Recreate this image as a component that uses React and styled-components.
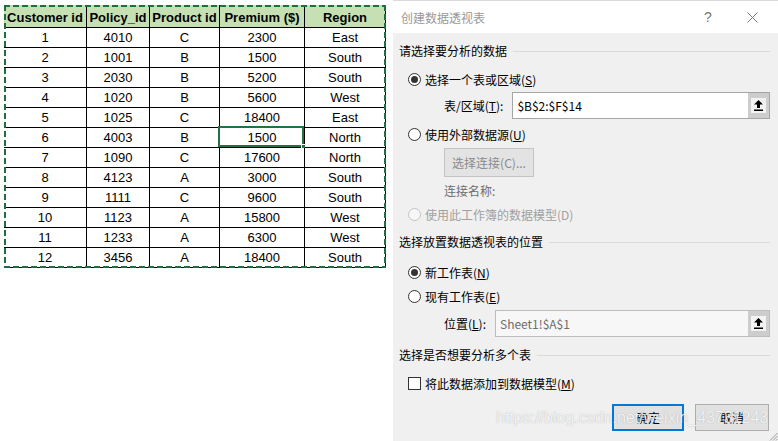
import React from "react";
import styled, { createGlobalStyle } from "styled-components";

const GlobalStyle = createGlobalStyle`
  html, body {
    margin: 0;
    padding: 0;
    background: #fff;
  }
  body {
    font-family: "Liberation Sans", Arial, sans-serif;
  }
`;

const Page = styled.div`
  display: flex;
  width: 778px;
  height: 441px;
  overflow: hidden;
`;

const LeftPane = styled.div`
  width: 393px;
  flex-shrink: 0;
  padding: 5px 0 0 4px;
  box-sizing: border-box;
`;

const dash = (dir) =>
  `repeating-linear-gradient(${dir}, #1f6e42 0 6px, transparent 6px 9px)`;

const Sheet = styled.div`
  position: relative;
  width: 382px;
  display: grid;
  grid-template-columns: 83px 63px 70px 85px 81px;

  &::after {
    content: "";
    position: absolute;
    inset: 0;
    pointer-events: none;
    background:
      ${dash("90deg")} top left / 100% 2px no-repeat,
      ${dash("90deg")} bottom left / 100% 2px no-repeat,
      ${dash("180deg")} top left / 2px 100% no-repeat,
      ${dash("180deg")} top right / 2px 100% no-repeat;
  }
`;

const Cell = styled.div`
  position: relative;
  box-sizing: border-box;
  height: ${(p) => (p.$head ? "23px" : "20px")};
  padding-top: ${(p) => (p.$head ? "2px" : "0")};
  border-right: 1px solid #000;
  border-bottom: 1px solid #000;
  background: ${(p) => (p.$head ? "#c6e0b4" : "#fff")};
  font-size: 13px;
  font-weight: ${(p) => (p.$head ? 700 : 400)};
  color: #000;
  display: flex;
  align-items: center;
  justify-content: center;
  white-space: nowrap;
`;

const Selection = styled.div`
  position: absolute;
  left: -2px;
  top: -2px;
  right: 0;
  bottom: 0;
  border: 2px solid #217346;
  pointer-events: none;

  &::after {
    content: "";
    position: absolute;
    right: -4px;
    bottom: -4px;
    width: 5px;
    height: 5px;
    background: #217346;
    border: 1px solid #fff;
    box-sizing: border-box;
  }
`;

const Dialog = styled.div`
  position: relative;
  width: 385px;
  height: 441px;
  flex-shrink: 0;
  background: #f0f0f0;
  font-family: "Noto Sans CJK SC", "Liberation Sans", sans-serif;
  font-size: 12px;
  color: #000;
  overflow: hidden;
`;

const TitleBar = styled.div`
  height: 33px;
  box-sizing: border-box;
  background: #fff;
  border-top: 1px solid #dcdcdc;
  display: flex;
  align-items: center;
  padding-left: 8px;
`;

const Title = styled.span`
  color: #999;
  font-size: 12px;
`;

const TitleButton = styled.div`
  width: 44px;
  height: 32px;
  display: flex;
  align-items: center;
  justify-content: center;
  color: #777;
  font-size: 14px;
  font-family: "Liberation Sans", sans-serif;
  margin-left: ${(p) => (p.$first ? "auto" : "0")};
  margin-right: ${(p) => (p.$last ? "4px" : "0")};
`;

const Body = styled.div`
  padding: 0 8px 0 6px;
  display: flex;
  flex-direction: column;
`;

const SectionHead = styled.div`
  height: 20px;
  margin-top: ${(p) => p.$mt}px;
  display: flex;
  align-items: center;
  gap: 6px;
  line-height: 20px;

  &::after {
    content: "";
    flex: 1;
    height: 1px;
    background: #dadada;
  }
`;

const OptionRow = styled.div`
  height: 20px;
  margin-top: ${(p) => p.$mt}px;
  padding-left: 9px;
  display: flex;
  align-items: center;
  gap: 4px;
  color: ${(p) => (p.$disabled ? "#a0a0a0" : "#000")};
`;

const Radio = styled.span`
  width: 13px;
  height: 13px;
  box-sizing: border-box;
  border-radius: 50%;
  border: 1px solid ${(p) => (p.$disabled ? "#c4c4c4" : "#333")};
  background: ${(p) => (p.$disabled ? "#f7f7f7" : "#fff")};
  display: flex;
  align-items: center;
  justify-content: center;
  flex-shrink: 0;

  &::after {
    content: "";
    display: ${(p) => (p.$checked ? "block" : "none")};
    width: 7px;
    height: 7px;
    border-radius: 50%;
    background: #333;
  }
`;

const Checkbox = styled.span`
  width: 13px;
  height: 13px;
  box-sizing: border-box;
  border: 1px solid #333;
  background: #fff;
  flex-shrink: 0;
`;

const Field = styled.div`
  height: 27px;
  margin-top: ${(p) => p.$mt}px;
  padding-left: 45px;
  display: flex;
  align-items: center;
  gap: 9px;
`;

const InputBox = styled.div`
  flex: 1;
  height: 27px;
  box-sizing: border-box;
  border: 1px solid ${(p) => (p.$disabled ? "#bcbcbc" : "#a6a6a6")};
  background: ${(p) => (p.$disabled ? "#f7f7f7" : "#fff")};
  display: flex;
  align-items: stretch;
`;

const InputText = styled.div`
  flex: 1;
  display: flex;
  align-items: center;
  padding-left: 4px;
  color: ${(p) => (p.$disabled ? "#6d6d6d" : "#000")};
`;

const PickButton = styled.div`
  width: 21px;
  background: #cdcdcd;
  display: flex;
  align-items: center;
  justify-content: center;
`;

const PickFace = styled.div`
  width: 15px;
  height: 15px;
  background: #f3f3f3;
  display: flex;
  align-items: center;
  justify-content: center;
`;

const ConnButton = styled.div`
  width: 90px;
  height: 29px;
  box-sizing: border-box;
  margin-top: ${(p) => p.$mt}px;
  margin-left: 45px;
  background: #e3e3e3;
  border: 1px solid #c4c4c4;
  color: #8a8a8a;
  display: flex;
  align-items: center;
  justify-content: center;
`;

const Note = styled.div`
  height: 16px;
  line-height: 16px;
  margin-top: ${(p) => p.$mt}px;
  padding-left: 45px;
  color: #6d6d6d;
`;

const Footer = styled.div`
  margin-top: 11px;
  display: flex;
  justify-content: flex-end;
  gap: 11px;
  padding-right: 1px;
`;

const DialogButton = styled.div`
  width: ${(p) => p.$w}px;
  height: 27px;
  box-sizing: border-box;
  background: #e1e1e1;
  border: ${(p) => (p.$default ? "2px solid #0078d7" : "1px solid #adadad")};
  display: flex;
  align-items: center;
  justify-content: center;
`;

const Watermark = styled.div`
  position: absolute;
  left: 103px;
  top: 409px;
  font-family: "Liberation Sans", Arial, sans-serif;
  font-size: 16px;
  color: rgba(255, 255, 255, 0.85);
  text-shadow: 0 0 1px rgba(110, 110, 110, 0.55);
  white-space: nowrap;
  pointer-events: none;
`;

const Grip = styled.svg`
  position: absolute;
  right: 0;
  bottom: 0;
`;

const UploadIcon = () => (
  <svg width="9" height="11" viewBox="0 0 9 11">
    <path d="M4.5 0 L9 4.5 H6 V8 H3 V4.5 H0 Z" fill="#000" />
    <rect x="0" y="9.5" width="9" height="1.5" fill="#000" />
  </svg>
);

const CloseIcon = () => (
  <svg width="11" height="11" viewBox="0 0 11 11">
    <path d="M0.5 0.5 L10.5 10.5 M10.5 0.5 L0.5 10.5" stroke="#777" strokeWidth="1" />
  </svg>
);

const headers = ["Customer id", "Policy_id", "Product id", "Premium ($)", "Region"];

const rows = [
  [1, 4010, "C", 2300, "East"],
  [2, 1001, "B", 1500, "South"],
  [3, 2030, "B", 5200, "South"],
  [4, 1020, "B", 5600, "West"],
  [5, 1025, "C", 18400, "East"],
  [6, 4003, "B", 1500, "North"],
  [7, 1090, "C", 17600, "North"],
  [8, 4123, "A", 3000, "South"],
  [9, 1111, "C", 9600, "South"],
  [10, 1123, "A", 15800, "West"],
  [11, 1233, "A", 6300, "West"],
  [12, 3456, "A", 18400, "South"],
];

const App = () => {
  return (
    <Page>
      <GlobalStyle />
      <LeftPane>
        <Sheet>
          {headers.map((h) => (
            <Cell key={h} $head>
              {h}
            </Cell>
          ))}
          {rows.map((r, i) =>
            r.map((v, j) => (
              <Cell key={`${i}-${j}`}>
                {v}
                {i === 5 && j === 3 && <Selection />}
              </Cell>
            ))
          )}
        </Sheet>
      </LeftPane>

      <Dialog>
        <TitleBar>
          <Title>创建数据透视表</Title>
          <TitleButton $first>?</TitleButton>
          <TitleButton $last>
            <CloseIcon />
          </TitleButton>
        </TitleBar>

        <Body>
          <SectionHead $mt={8}>请选择要分析的数据</SectionHead>
          <OptionRow $mt={8}>
            <Radio $checked />
            <span>
              选择一个表或区域(<u>S</u>)
            </span>
          </OptionRow>
          <Field $mt={3}>
            <span>
              表/区域(<u>T</u>):
            </span>
            <InputBox>
              <InputText>$B$2:$F$14</InputText>
              <PickButton>
                <PickFace>
                  <UploadIcon />
                </PickFace>
              </PickButton>
            </InputBox>
          </Field>
          <OptionRow $mt={5}>
            <Radio />
            <span>
              使用外部数据源(<u>U</u>)
            </span>
          </OptionRow>
          <ConnButton $mt={4}>选择连接(C)...</ConnButton>
          <Note $mt={6}>连接名称:</Note>
          <OptionRow $mt={5} $disabled>
            <Radio $disabled />
            <span>使用此工作簿的数据模型(D)</span>
          </OptionRow>

          <SectionHead $mt={8}>选择放置数据透视表的位置</SectionHead>
          <OptionRow $mt={10}>
            <Radio $checked />
            <span>
              新工作表(<u>N</u>)
            </span>
          </OptionRow>
          <OptionRow $mt={4}>
            <Radio />
            <span>
              现有工作表(<u>E</u>)
            </span>
          </OptionRow>
          <Field $mt={4}>
            <span>
              位置(<u>L</u>):
            </span>
            <InputBox $disabled>
              <InputText $disabled>Sheet1!$A$1</InputText>
              <PickButton>
                <PickFace>
                  <UploadIcon />
                </PickFace>
              </PickButton>
            </InputBox>
          </Field>

          <SectionHead $mt={8}>选择是否想要分析多个表</SectionHead>
          <OptionRow $mt={8}>
            <Checkbox />
            <span>
              将此数据添加到数据模型(<u>M</u>)
            </span>
          </OptionRow>

          <Footer>
            <DialogButton $w={72} $default>
              确定
            </DialogButton>
            <DialogButton $w={74}>取消</DialogButton>
          </Footer>
        </Body>

        <Watermark>https://blog.csdn.net/weixin_43731243</Watermark>
        <Grip width="9" height="9" viewBox="0 0 9 9">
          <path d="M8.5 1 L1 8.5 M8.5 4 L4 8.5 M8.5 7 L7 8.5" stroke="#9a9a9a" strokeWidth="1" />
        </Grip>
      </Dialog>
    </Page>
  );
};

export default App;
